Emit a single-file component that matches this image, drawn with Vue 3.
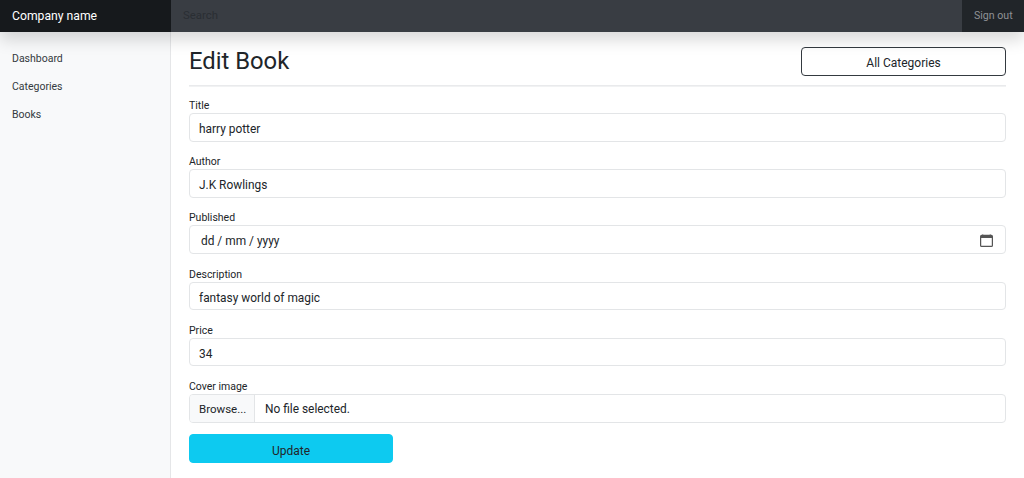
<script setup>
const links = ['Dashboard', 'Categories', 'Books']
const fields = [
  { label: 'Title', value: 'harry potter' },
  { label: 'Author', value: 'J.K Rowlings' },
  { label: 'Published', date: true },
  { label: 'Description', value: 'fantasy world of magic' },
  { label: 'Price', value: '34' }
]
</script>

<template>
  <div class="page">
    <header class="topbar">
      <a class="brand">Company name</a>
      <div class="search">Search</div>
      <a class="signout">Sign out</a>
    </header>
    <div class="body">
      <nav class="sidebar">
        <a v-for="l in links" :key="l" class="link">{{ l }}</a>
      </nav>
      <main class="main">
        <div class="head">
          <h2>Edit Book</h2>
          <button class="outline">All Categories</button>
        </div>
        <form class="form" @submit.prevent>
          <div v-for="f in fields" :key="f.label" class="field">
            <label>{{ f.label }}</label>
            <div v-if="f.date" class="input date">
              <span class="date-text">dd / mm / yyyy</span>
              <svg class="cal" width="13" height="13" viewBox="0 0 16 16" fill="#555">
                <path d="M3.5 0a.5.5 0 0 1 .5.5V1h8V.5a.5.5 0 0 1 1 0V1h1a2 2 0 0 1 2 2v11a2 2 0 0 1-2 2H2a2 2 0 0 1-2-2V3a2 2 0 0 1 2-2h1V.5a.5.5 0 0 1 .5-.5zM1.5 5v9a.5.5 0 0 0 .5.5h12a.5.5 0 0 0 .5-.5V5h-13z"/>
              </svg>
            </div>
            <div v-else class="input">{{ f.value }}</div>
          </div>
          <div class="field">
            <label>Cover image</label>
            <div class="input file">
              <span class="browse">Browse...</span>
              <span class="fname">No file selected.</span>
            </div>
          </div>
          <button class="update">Update</button>
        </form>
      </main>
    </div>
  </div>
</template>

<style>
html, body { margin: 0; background: #fff; }
</style>

<style scoped>
.page {
  width: 1024px;
  height: 478px;
  overflow: hidden;
  display: flex;
  flex-direction: column;
  font-family: Roboto, "Noto Sans", sans-serif;
  color: #212529;
}
.topbar {
  height: 32px;
  flex: none;
  display: flex;
  align-items: stretch;
  background: #343a40;
  box-shadow: 0 8px 16px rgba(0, 0, 0, 0.15);
  position: relative;
  z-index: 2;
  line-height: 31px;
}
.brand {
  width: 171px;
  box-sizing: border-box;
  padding-left: 12px;
  background: #16191c;
  color: #fff;
  font-size: 12.2px;
  line-height: 32px;
}
.search {
  flex: 1;
  padding-left: 12px;
  background: #393d43;
  color: #2a2e33;
  font-size: 11.4px;
}
.signout {
  width: 62px;
  box-sizing: border-box;
  padding-left: 12px;
  background: #212529;
  color: #8f9296;
  font-size: 10.6px;
}
.body { flex: 1; display: flex; min-height: 0; }
.sidebar {
  width: 171px;
  box-sizing: border-box;
  flex: none;
  background: #f8f9fa;
  border-right: 1px solid #e5e6e8;
  padding-top: 19px;
  display: flex;
  flex-direction: column;
  gap: 12px;
}
.link {
  height: 16px;
  line-height: 16px;
  padding-left: 12px;
  font-size: 10.5px;
  color: #343a40;
}
.main { flex: 1; padding: 0 18px; min-width: 0; }
.head {
  display: flex;
  justify-content: space-between;
  align-items: center;
  height: 53px;
  border-bottom: 1px solid #e9eaec;
  box-shadow: 0 1px 0 #f1f2f3;
}
h2 {
  margin: 0;
  font-weight: 400;
  font-size: 23.8px;
  line-height: 57px;
  padding-top: 6px;
  color: #212529;
}
.outline {
  width: 205px;
  height: 29px;
  margin-top: 5px;
  padding-top: 5px;
  background: #fff;
  border: 1px solid #343a40;
  border-radius: 4px;
  font: inherit;
  font-size: 12px;
  color: #212529;
}
.form { display: flex; flex-direction: column; padding-top: 12px; gap: 12.6px; }
.field label {
  display: block;
  height: 14px;
  line-height: 16px;
  margin-bottom: 1px;
  font-size: 10.5px;
  color: #212529;
}
.input {
  height: 28.6px;
  box-sizing: border-box;
  border: 1px solid #e3e5e7;
  border-radius: 4px;
  padding: 2px 9px 0;
  line-height: 27px;
  font-size: 11.9px;
  color: #212529;
  background: #fff;
}
.date { display: flex; justify-content: space-between; align-items: center; padding: 0 11px; }
.date-text { padding-top: 3px; }
.cal { margin-top: 1px; margin-right: 1px; }
.file { display: flex; padding: 0; overflow: hidden; line-height: 29px; }
.browse { width: 65px; flex: none; box-sizing: border-box; padding-left: 9px; background: #f8f9fa; border-right: 1px solid #e3e5e7; font-size: 11.5px; }
.fname { padding-left: 10px; }
.update {
  width: 204px;
  height: 29px;
  margin-top: -1px;
  padding-top: 5px;
  background: #0dcaf0;
  border: 1px solid #0dcaf0;
  border-radius: 4px;
  font: inherit;
  font-size: 12px;
  color: #212529;
}
</style>
